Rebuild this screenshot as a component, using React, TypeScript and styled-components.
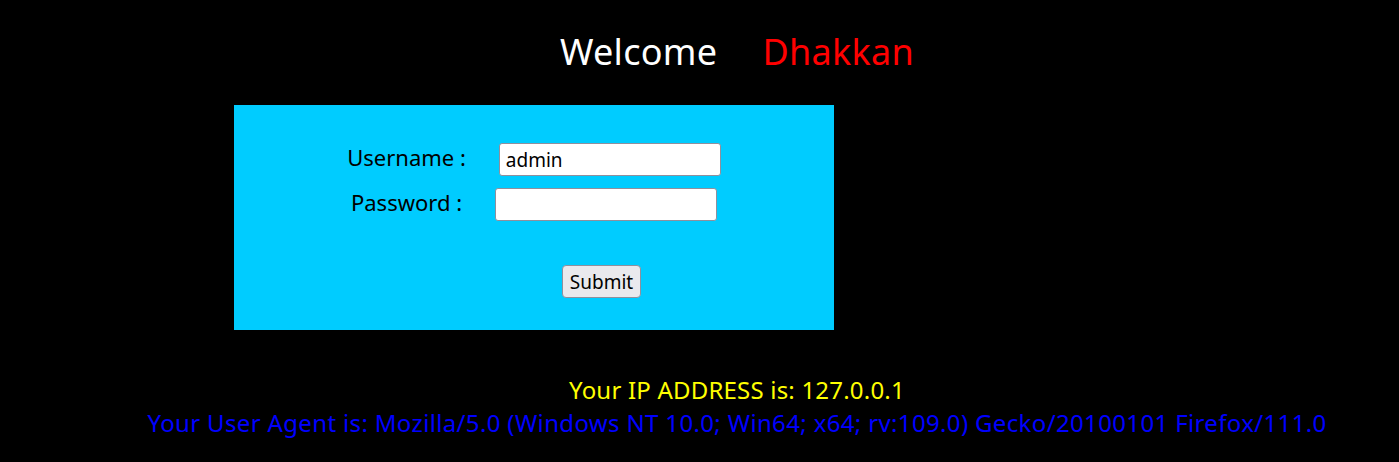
import React from "react";
import styled, { createGlobalStyle } from "styled-components";

const Global = createGlobalStyle`
  html, body { margin: 0; padding: 0; background: #000; }
  body { font-family: "Noto Sans", "Open Sans", sans-serif; }
`;

const Page = styled.div`
  width: 1399px;
  height: 462px;
  background: #000;
  overflow: hidden;
`;

const Title = styled.div`
  display: flex;
  justify-content: center;
  gap: 45px;
  padding-left: 75px;
  padding-top: 28px;
  font-size: 36px;
  line-height: 48px;
  letter-spacing: 0.3px;
  color: #fff;
`;

const Name = styled.span`
  color: #ff0000;
`;

const Box = styled.div`
  margin: 29px 0 0 234px;
  width: 600px;
  height: 225px;
  box-sizing: border-box;
  background: #00ccff;
  padding-top: 38px;
  display: flex;
  flex-direction: column;
  align-items: center;
  color: #000;
`;

const Row = styled.div<{ $gap: number }>`
  display: flex;
  align-items: center;
  gap: 33px;
  margin-top: ${(p) => p.$gap}px;
  font-size: 22px;
`;

const Label = styled.span`
  line-height: 29px;
  padding-bottom: 4px;
`;

const Input = styled.input`
  width: 222px;
  height: 33px;
  box-sizing: border-box;
  border: 1px solid #8f8f9d;
  border-radius: 3px;
  background: #fff;
  padding: 2px 6px;
  font-family: "Noto Sans", sans-serif;
  font-size: 19px;
  color: #000;
  outline: none;
`;

const Button = styled.button`
  margin-top: 44px;
  margin-left: 135px;
  height: 33px;
  padding: 0 7px;
  box-sizing: border-box;
  border: 1px solid #8f8f9d;
  border-radius: 4px;
  background: #e9e9ed;
  font-family: "Noto Sans", sans-serif;
  font-size: 19px;
  color: #000;
`;

const Footer = styled.div`
  padding-left: 75px;
  margin-top: 43px;
  text-align: center;
  font-size: 24px;
  line-height: 33px;
`;

const Line = styled.div<{ $color: string; $spacing: number }>`
  color: ${(p) => p.$color};
  letter-spacing: ${(p) => p.$spacing}px;
`;

export default function App() {
  return (
    <Page>
      <Global />
      <Title>
        <span>Welcome</span>
        <Name>Dhakkan</Name>
      </Title>
      <Box>
        <Row $gap={0}>
          <Label>Username :</Label>
          <Input type="text" defaultValue="admin" />
        </Row>
        <Row $gap={12}>
          <Label>Password :</Label>
          <Input type="text" defaultValue="" />
        </Row>
        <Button type="button">Submit</Button>
      </Box>
      <Footer>
        <Line $color="#ffff00" $spacing={0.2}>Your IP ADDRESS is: 127.0.0.1</Line>
        <Line $color="#0000ff" $spacing={0.35}>
          Your User Agent is: Mozilla/5.0 (Windows NT 10.0; Win64; x64; rv:109.0) Gecko/20100101 Firefox/111.0
        </Line>
      </Footer>
    </Page>
  );
}
